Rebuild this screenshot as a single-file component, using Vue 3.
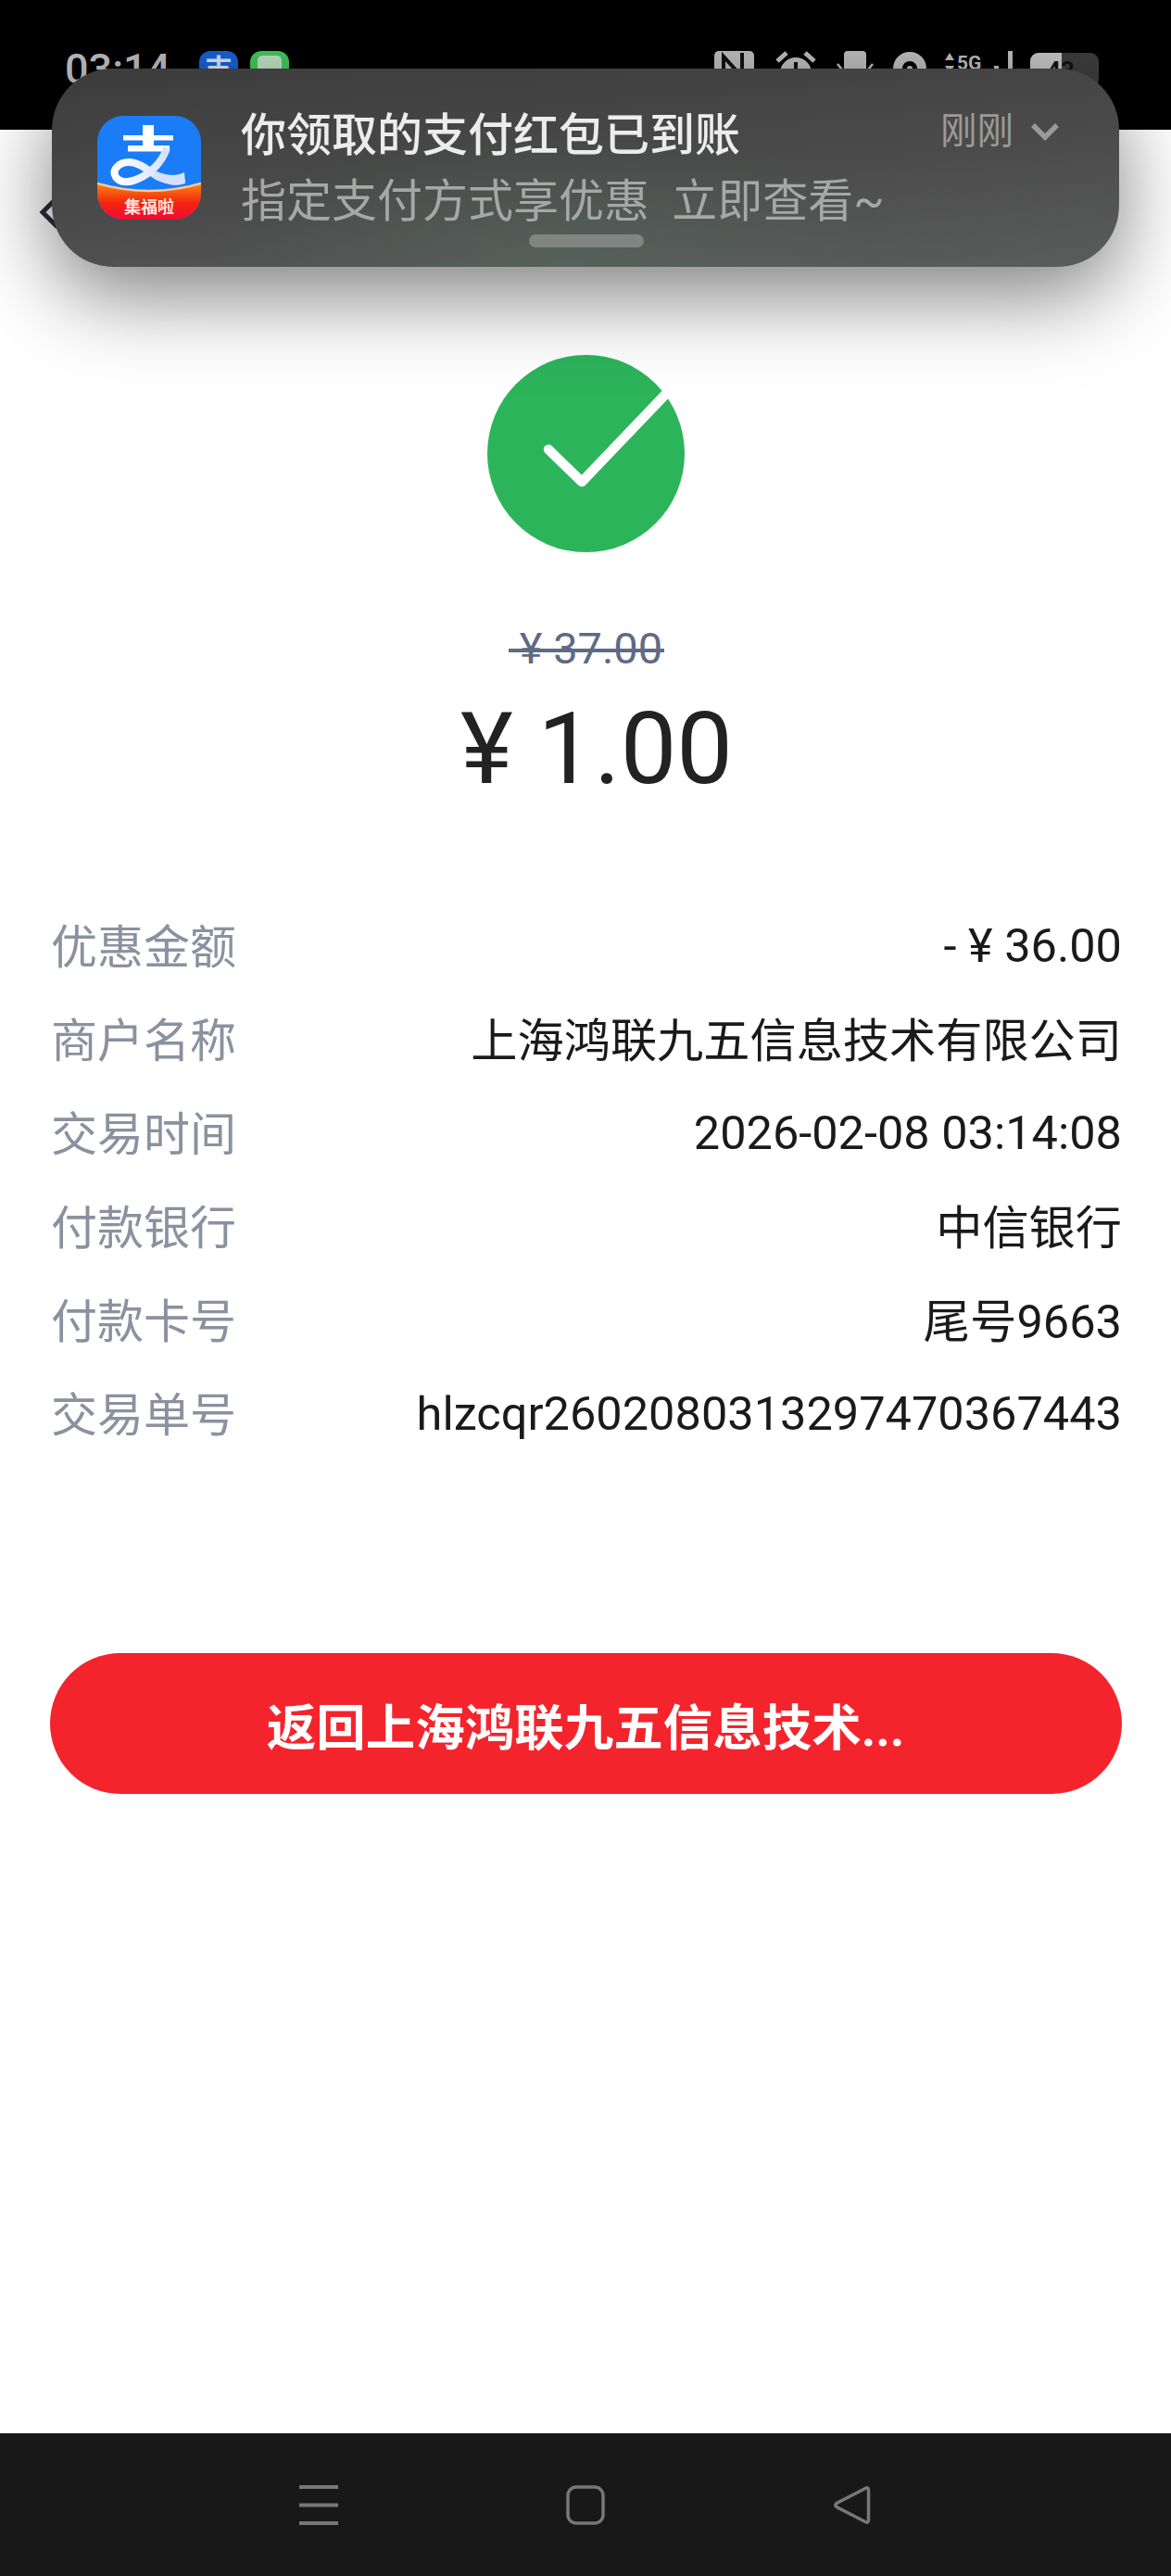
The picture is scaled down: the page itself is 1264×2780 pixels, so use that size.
<template>
  <div class="page">
    <div class="status">
      <span class="time">03:14</span>
      <span class="mini mini-blue">支</span>
      <span class="mini mini-green"><i></i></span>
      <div class="status-right">
        <svg class="si nfc" viewBox="0 0 43 36"><rect width="43" height="36" rx="5" fill="#bdbdbd"/><path d="M10 36V6l20 22V2" fill="none" stroke="#111" stroke-width="4"/></svg>
        <svg class="si alarm" viewBox="0 0 44 36"><circle cx="22" cy="24" r="17" fill="#bdbdbd"/><path d="M2 11 12 2M42 11 32 2" stroke="#bdbdbd" stroke-width="5"/><path d="M22 12v14" stroke="#111" stroke-width="4"/></svg>
        <svg class="si vib" viewBox="0 0 44 36"><rect x="10" y="0" width="24" height="36" rx="4" fill="#bdbdbd"/><path d="M3 14l4 5-4 5M41 14l-4 5 4 5" fill="none" stroke="#bdbdbd" stroke-width="2.5"/></svg>
        <svg class="si loc" viewBox="0 0 36 36"><circle cx="18" cy="19" r="13" fill="none" stroke="#bdbdbd" stroke-width="10"/><circle cx="18" cy="19" r="3" fill="#bdbdbd"/></svg>
        <span class="net"><svg viewBox="0 0 10 24" class="arrows"><path d="M5 1l5 8H0zM5 23l-5-8h10z" fill="#bdbdbd"/></svg>5G</span>
        <svg class="si signal" viewBox="0 0 20 36"><rect x="0" y="16" width="5" height="20" fill="#bdbdbd"/><rect x="15" y="0" width="5" height="36" fill="#bdbdbd"/></svg>
        <span class="battery"><i></i><b>43</b></span>
      </div>
    </div>

    <div class="notice">
      <svg class="app" viewBox="0 0 112 112">
        <defs>
          <clipPath id="appclip"><rect width="112" height="112" rx="28"/></clipPath>
          <linearGradient id="band" x1="0" y1="0" x2="0" y2="1">
            <stop offset="0" stop-color="#f98412"/>
            <stop offset=".55" stop-color="#f4230f"/>
            <stop offset="1" stop-color="#f20b38"/>
          </linearGradient>
          <linearGradient id="tail" x1="0" y1="0" x2="1" y2="0">
            <stop offset="0" stop-color="#ffffff"/>
            <stop offset="1" stop-color="#c6d9fb"/>
          </linearGradient>
        </defs>
        <g clip-path="url(#appclip)">
          <rect width="112" height="112" fill="#1a7cf6"/>
          <path d="M0 73Q56 91 112 73V112H0Z" fill="url(#band)"/>
          <path d="M0 73Q56 89 112 73" fill="none" stroke="#f7c89a" stroke-width="2.5"/>
          <g fill="#fff">
            <rect x="28" y="21" width="54" height="5.5"/>
            <rect x="49" y="10" width="12" height="26"/>
            <rect x="33" y="32" width="45" height="6.500"/>
          </g>
          <path d="M75 35C70 50 58 62 44 68C33 73 24 72 20 66C15 58 24 50 34 50C46 50 56 60 66 66C74 70 84 70 94 67" fill="none" stroke="url(#tail)" stroke-width="8"/>
          <path d="M62 59C72 64 84 66 94 61L95 73C84 77 72 74 62 67Z" fill="#d3e1fb"/>
          <text x="56" y="105" text-anchor="middle" class="app-text">集福啦</text>
        </g>
      </svg>
      <div class="notice-text">
        <div class="notice-title">你领取的支付红包已到账</div>
        <div class="notice-sub">指定支付方式享优惠&nbsp;&nbsp;立即查看~</div>
      </div>
      <div class="notice-meta">
        <span>刚刚</span>
        <svg class="chev" viewBox="0 0 32 20"><path d="M3 3l13 13L29 3" fill="none" stroke="#9a9a9a" stroke-width="5.5"/></svg>
      </div>
      <i class="handle"></i>
    </div>

    <header class="head">
      <svg class="back" viewBox="0 0 24 38"><path d="M20 3 4 19l16 16" fill="none" stroke="#2b2b3c" stroke-width="5"/></svg>
    </header>

    <main class="content">
      <svg class="ok" viewBox="0 0 213 213">
        <circle cx="106.5" cy="106.5" r="106.5" fill="#2cb45b"/>
        <path d="M66 102l36 35L212 22" fill="none" stroke="#fff" stroke-width="10.5" stroke-linecap="round" stroke-linejoin="round"/>
      </svg>
      <div class="old-price"><span>¥ 37.00</span></div>
      <div class="new-price">¥ 1.00</div>

      <dl class="rows">
        <div v-for="r in rows" :key="r.label" class="row">
          <dt>{{ r.label }}</dt>
          <dd :class="r.kind">{{ r.value }}</dd>
        </div>
      </dl>

      <button class="btn">返回上海鸿联九五信息技术...</button>
    </main>

    <nav class="nav">
      <svg class="nav-i menu" viewBox="0 0 42 43"><path d="M0 2h42M0 21.500h42M0 41h42" stroke="#777" stroke-width="4"/></svg>
      <svg class="nav-i home" viewBox="0 0 42 43"><rect x="2" y="2" width="38" height="39" rx="9" fill="none" stroke="#777" stroke-width="3.5"/></svg>
      <svg class="nav-i tri" viewBox="0 0 42 43"><path d="M38.500 5.500V37.500Q38.500 41.500 35 39.500L4 23.500Q1.500 21.500 4 19.500L35 3.500Q38.500 1.500 38.500 5.500Z" fill="none" stroke="#777" stroke-width="3.500"/></svg>
    </nav>
  </div>
</template>

<script setup>
const rows = [
  { label: '优惠金额', value: '- ¥ 36.00', kind: 'num' },
  { label: '商户名称', value: '上海鸿联九五信息技术有限公司', kind: 'cjk' },
  { label: '交易时间', value: '2026-02-08 03:14:08', kind: 'num' },
  { label: '付款银行', value: '中信银行', kind: 'cjk' },
  { label: '付款卡号', value: '尾号9663', kind: 'mix' },
  { label: '交易单号', value: 'hlzcqr2602080313297470367443', kind: 'num' }
]
</script>

<style>
html, body { margin: 0; background: #fff; }
</style>

<style scoped>
.page {
  position: relative;
  width: 1264px;
  min-height: 2780px;
  display: flex;
  flex-direction: column;
  background: #fff;
  overflow: hidden;
  font-family: Roboto, "Noto Sans CJK SC", sans-serif;
}
.status {
  height: 140px;
  flex: none;
  background: #000;
  display: flex;
  align-items: flex-start;
  padding: 55px 78px 0 70px;
  box-sizing: border-box;
}
.time {
  font-size: 45px;
  line-height: 40px;
  font-weight: 500;
  color: #bcbcbc;
  width: 145px;
}
.mini {
  width: 42px;
  height: 42px;
  border-radius: 12px;
  margin-right: 13px;
  display: block;
  overflow: hidden;
}
.mini-blue {
  background: #1662d8;
  color: #d8e6fb;
  font-size: 30px;
  line-height: 40px;
  text-align: center;
  font-weight: 700;
}
.mini-green {
  background: #43c85a;
  padding: 5px 8px;
  box-sizing: border-box;
}
.mini-green i {
  display: block;
  height: 32px;
  border-radius: 5px;
  background: #bfe2c4;
}
.status-right {
  margin-left: auto;
  display: flex;
  align-items: flex-start;
}
.si { display: block; height: 36px; }
.nfc { width: 43px; margin-right: 23px; }
.alarm { width: 44px; margin-right: 20px; }
.vib { width: 44px; margin-right: 19px; }
.loc { width: 36px; margin-right: 20px; }
.net {
  width: 43px;
  margin-right: 10px;
  display: flex;
  align-items: center;
  gap: 3px;
  font-size: 21px;
  line-height: 26px;
  font-weight: 700;
  color: #bdbdbd;
}
.arrows { width: 10px; height: 24px; flex: none; }
.signal { width: 20px; margin-right: 19px; }
.battery {
  position: relative;
  display: block;
  width: 74px;
  height: 38px;
  margin-top: 2px;
  border-radius: 9px;
  background: #3c3c3c;
  overflow: hidden;
}
.battery i {
  position: absolute;
  left: 0;
  top: 0;
  bottom: 0;
  width: 34px;
  background: #c4c4c4;
}
.battery b {
  position: absolute;
  left: 18px;
  top: 3px;
  font-size: 26px;
  line-height: 32px;
  font-weight: 700;
  color: #111;
}
.notice {
  position: absolute;
  left: 56px;
  top: 74px;
  width: 1152px;
  height: 214px;
  box-sizing: border-box;
  padding: 51px 64px 0 49px;
  display: flex;
  align-items: flex-start;
  border-radius: 66px;
  background:
    radial-gradient(ellipse 380px 150px at 48% 100%, rgba(88, 104, 96, .55), rgba(88, 104, 96, 0)),
    linear-gradient(175deg, #3b3c3b 0%, #4a4b4a 55%, #5b5c5c 100%);
  box-shadow: 0 30px 90px rgba(0, 0, 0, .5);
  z-index: 2;
}
.app { width: 112px; height: 112px; flex: none; }
.app-text {
  font-family: "Noto Sans CJK SC", sans-serif;
  font-size: 18px;
  font-weight: 700;
  fill: #ffe6df;
}
.notice-text {
  flex: 1;
  margin-left: 43px;
  margin-top: -14px;
}
.notice-title {
  font-size: 49px;
  line-height: 71px;
  font-weight: 500;
  color: #ececec;
  white-space: nowrap;
}
.notice-sub {
  font-size: 49px;
  line-height: 71px;
  color: #a6a8a7;
  white-space: nowrap;
}
.notice-meta {
  display: flex;
  align-items: center;
  gap: 18px;
  margin-top: -11px;
  font-size: 39.500px;
  line-height: 56px;
  color: #9a9a9a;
}
.chev { width: 32px; height: 20px; }
.handle {
  position: absolute;
  left: 515px;
  bottom: 21px;
  width: 124px;
  height: 14px;
  border-radius: 7px;
  background: #7f8582;
}
.head {
  height: 243px;
  flex: none;
  box-sizing: border-box;
  padding: 70px 0 0 42px;
}
.back { display: block; width: 24px; height: 38px; }
.content {
  display: flex;
  flex-direction: column;
  align-items: center;
}
.ok { width: 213px; height: 213px; display: block; overflow: visible; }
.old-price {
  margin-top: 74px;
  height: 60px;
  font-size: 47px;
  line-height: 60px;
  color: #5f6a84;
}
.old-price span {
  position: relative;
  display: block;
  padding-left: 12px;
}
.old-price span::after {
  content: "";
  position: absolute;
  left: 0;
  right: -2px;
  top: 30px;
  height: 4px;
  background: #5f6a84;
}
.new-price {
  margin-top: 3px;
  padding-left: 24px;
  font-size: 108px;
  line-height: 150px;
  color: #222;
  white-space: nowrap;
}
.rows {
  width: 100%;
  box-sizing: border-box;
  padding: 0 53px 0 55px;
  margin: 84px 0 0;
}
.row {
  height: 101px;
  display: flex;
  align-items: center;
  justify-content: space-between;
  font-size: 50.500px;
}
.row dt { color: #8a919f; font-size: 50px; }
.row dd { margin: 0; color: #1a1a1a; white-space: nowrap; }
.row dd.cjk { font-size: 50.200px; }
.row dd.num { padding-top: 5px; }
.btn {
  width: 1157px;
  height: 152px;
  margin-top: 211px;
  border: 0;
  border-radius: 76px;
  background: #f4242c;
  color: #fff;
  font-family: inherit;
  font-size: 53.500px;
  font-weight: 700;
}
.nav {
  margin-top: auto;
  height: 154px;
  flex: none;
  background: #181818;
  position: relative;
  display: flex;
  align-items: center;
  box-sizing: border-box;
  padding-left: 323px;
  gap: 246px;
}
.nav-i { width: 42px; height: 43px; display: block; flex: none; }
</style>
